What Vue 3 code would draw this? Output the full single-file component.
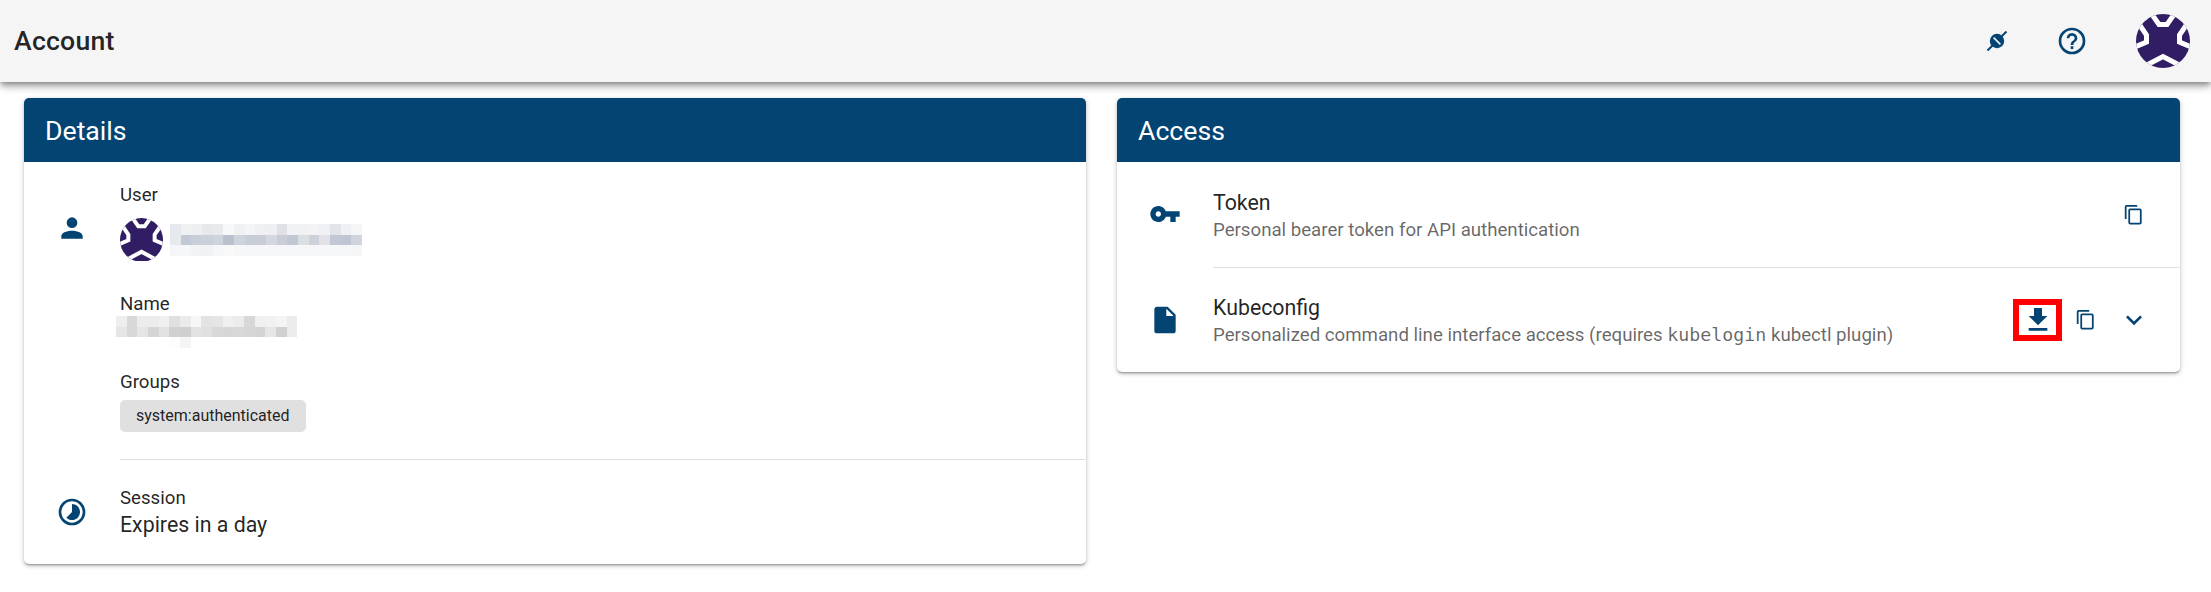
<template>
  <div class="page">
    <header class="app-bar">
      <div class="app-title">Account</div>
      <div class="app-actions">
        <svg class="ic-plug" viewBox="0 0 24 24">
          <path class="plug-tail" d="M2.5 21.5L21.5 2.5" />
          <circle cx="12" cy="12" r="7.2" />
          <path class="plug-gap" d="M8.6 8.6L15.4 15.4" />
        </svg>
        <svg class="ic-help" viewBox="0 0 24 24"><path :d="icons.help" /></svg>
        <div class="avatar avatar-lg">
          <svg viewBox="0 0 54 54">
            <rect width="54" height="54" fill="#311d63" />
            <g fill="none" stroke="#fff" stroke-width="5">
              <polyline v-for="(l, i) in logoLines" :key="i" :points="l" />
            </g>
          </svg>
        </div>
      </div>
    </header>

    <main class="content">
      <section class="card">
        <h2 class="card-title">Details</h2>
        <div class="row row-details">
          <svg class="ic-row ic-account" viewBox="0 0 24 24"><path :d="icons.account" /></svg>
          <div class="details-main">
            <div class="label">User</div>
            <div class="user-line">
              <div class="avatar avatar-sm">
                <svg viewBox="0 0 54 54">
                  <rect width="54" height="54" fill="#311d63" />
                  <g fill="none" stroke="#fff" stroke-width="5">
                    <polyline v-for="(l, i) in logoLines" :key="i" :points="l" />
                  </g>
                </svg>
              </div>
              <div class="mosaic mosaic-user">
                <i v-for="(c, i) in userPixels" :key="i" :style="{ background: '#' + c }"></i>
              </div>
            </div>
            <div class="label label-name">Name</div>
            <div class="mosaic mosaic-name">
              <i v-for="(c, i) in namePixels" :key="i" :style="{ background: '#' + c }"></i>
            </div>
            <div class="label label-groups">Groups</div>
            <span class="chip">system:authenticated</span>
          </div>
        </div>
        <div class="divider divider-inset"></div>
        <div class="row row-session">
          <svg class="ic-row" viewBox="0 0 24 24"><path :d="icons.timelapse" /></svg>
          <div>
            <div class="label">Session</div>
            <div class="value">Expires in a day</div>
          </div>
        </div>
      </section>

      <section class="card card-access">
        <h2 class="card-title">Access</h2>
        <div class="row row-access">
          <svg class="ic-row" viewBox="0 0 24 24"><path :d="icons.key" /></svg>
          <div class="access-text">
            <div class="value">Token</div>
            <div class="sub">Personal bearer token for API authentication</div>
          </div>
          <div class="buttons">
            <span class="btn"><svg class="ic-copy" viewBox="0 0 24 24"><path :d="icons.copy" /></svg></span>
          </div>
        </div>
        <div class="divider divider-inset"></div>
        <div class="row row-access">
          <svg class="ic-row" viewBox="0 0 24 24"><path :d="icons.file" /></svg>
          <div class="access-text">
            <div class="value">Kubeconfig</div>
            <div class="sub">Personalized command line interface access (requires <code>kubelogin</code> kubectl plugin)</div>
          </div>
          <div class="buttons">
            <span class="btn btn-marked"><svg class="ic-big" viewBox="0 0 24 24"><path :d="icons.download" /></svg></span>
            <span class="btn"><svg class="ic-copy" viewBox="0 0 24 24"><path :d="icons.copy" /></svg></span>
            <span class="btn"><svg class="ic-big" viewBox="0 0 24 24"><path :d="icons.chevron" /></svg></span>
          </div>
        </div>
      </section>
    </main>
  </div>
</template>

<script setup>
const icons = {
  help: 'M11,18H13V16H11V18M12,2A10,10 0 0,0 2,12A10,10 0 0,0 12,22A10,10 0 0,0 22,12A10,10 0 0,0 12,2M12,20C7.59,20 4,16.41 4,12C4,7.59 7.59,4 12,4C16.41,4 20,7.59 20,12C20,16.41 16.41,20 12,20M12,6A4,4 0 0,0 8,10H10A2,2 0 0,1 12,8A2,2 0 0,1 14,10C14,12 11,11.75 11,15H13C13,12.75 16,12.5 16,10A4,4 0 0,0 12,6Z',
  account: 'M12,4A4,4 0 0,1 16,8A4,4 0 0,1 12,12A4,4 0 0,1 8,8A4,4 0 0,1 12,4M12,14C16.42,14 20,15.79 20,18V20H4V18C4,15.79 7.58,14 12,14Z',
  timelapse: 'M16.24,7.76C15.07,6.59 13.54,6 12,6V12L7.76,16.24C10.1,18.58 13.9,18.58 16.25,16.24C18.59,13.9 18.59,10.1 16.24,7.76M12,2A10,10 0 0,0 2,12A10,10 0 0,0 12,22A10,10 0 0,0 22,12A10,10 0 0,0 12,2M12,20A8,8 0 0,1 4,12A8,8 0 0,1 12,4A8,8 0 0,1 20,12A8,8 0 0,1 12,20Z',
  key: 'M7 14C5.9 14 5 13.1 5 12S5.9 10 7 10 9 10.9 9 12 8.1 14 7 14M12.6 10C11.8 7.7 9.6 6 7 6C3.7 6 1 8.7 1 12S3.7 18 7 18C9.6 18 11.8 16.3 12.6 14H16V18H20V14H23V10H12.6Z',
  file: 'M13,9V3.5L18.5,9M6,2C4.89,2 4,2.89 4,4V20A2,2 0 0,0 6,22H18A2,2 0 0,0 20,20V8L14,2H6Z',
  copy: 'M19,21H8V7H19M19,5H8A2,2 0 0,0 6,7V21A2,2 0 0,0 8,23H19A2,2 0 0,0 21,21V7A2,2 0 0,0 19,5M16,1H4A2,2 0 0,0 2,3V17H4V3H16V1Z',
  download: 'M5,20H19V18H5M19,9H15V3H9V9H5L12,16L19,9Z',
  chevron: 'M7.41,8.58L12,13.17L16.59,8.58L18,10L12,16L6,10L7.41,8.58Z',
}

const logoLines = [
  '15,-1 23,10.5 31,10.5 39,-1',
  '3,10 10.5,21 10.5,28 -1,33',
  '51,10 43.5,21 43.5,28 55,33',
  '9,52 27,42.5 45,52',
]

// the blurred-out values, row by row
const userPixels = [
  'e5e8ec', 'f0f1f3', 'eeeff2', 'e6e9ec', 'e8eaed', 'f7f8f9', 'f0f1f3', 'f4f5f6', 'eff0f3', 'eeeff2', 'dfe1e6', 'f1f2f3', 'f0f1f3', 'f3f3f5', 'eff0f3', 'e2e4e9', 'eff0f3', 'f4f5f6',
  'e7e9ec', 'c3c9d4', 'c9ced9', 'ccd0da', 'cfd3dc', 'b9c0ce', 'ced3dc', 'c8cdd8', 'c8cdd8', 'd5d7df', 'c8cdd8', 'c1c7d3', 'dbdee3', 'cdd1dc', 'e0e2e7', 'c1c7d4', 'bfc5d1', 'd0d5dd',
  'f5f6f7', 'f6f7f8', 'f2f3f4', 'f1f2f3', 'f6f7f8', 'f9f9fa', 'f6f7f8', 'f6f7f8', 'f6f7f8', 'f6f7f8', 'f6f7f8', 'f6f7f8', 'f6f7f8', 'f6f7f8', 'f6f7f8', 'f6f7f8', 'f6f7f8', 'f5f6f8',
]
const namePixels = [
  'eeeeee', 'd8d8d8', 'ececec', 'ececec', 'f0f0f0', 'e0e0e0', 'ebebeb', 'f7f7f7', 'e3e3e3', 'e5e5e5', 'f0f0f0', 'ececec', 'd8d8d8', 'f0f0f0', 'f1f1f1', 'f4f4f4', 'ebebeb',
  'e5e5e5', 'd8d8d8', 'e5e5e5', 'd5d5d5', 'e2e2e2', 'd0d0d0', 'cfcfcf', 'e3e3e3', 'e0e0e0', 'd8d8d8', 'd6d6d6', 'd8d8d8', 'd6d6d6', 'd4d4d4', 'e6e6e6', 'd0d0d0', 'ebebeb',
  'ffffff', 'ffffff', 'ffffff', 'ffffff', 'ffffff', 'fdfdfd', 'f5f5f5', 'ffffff', 'ffffff', 'ffffff', 'ffffff', 'ffffff', 'ffffff', 'ffffff', 'ffffff', 'ffffff', 'ffffff',
]
</script>

<style scoped>
.page {
  width: 2211px;
  height: 592px;
  overflow: hidden;
  background: #fff;
  font-family: Roboto, 'Liberation Sans', sans-serif;
  color: rgba(0, 0, 0, 0.87);
}

svg {
  display: block;
  flex: none;
  fill: #034473;
}

.app-bar {
  height: 82px;
  background: #f5f5f5;
  display: flex;
  align-items: center;
  justify-content: space-between;
  padding: 0 21px 0 14px;
  box-sizing: border-box;
  box-shadow: 0 3px 5px -1px rgba(0, 0, 0, 0.3), 0 5px 8px 0 rgba(0, 0, 0, 0.2), 0 1px 12px 0 rgba(0, 0, 0, 0.12);
  position: relative;
}

.app-title {
  font-size: 26.67px;
  font-weight: 500;
  letter-spacing: 0.2px;
}

.app-actions {
  display: flex;
  align-items: center;
}

.ic-plug {
  width: 24px;
  height: 24px;
  margin-right: 47px;
}

.plug-tail {
  fill: none;
  stroke: #034473;
  stroke-width: 2;
}

.plug-gap {
  fill: none;
  stroke: #f5f5f5;
  stroke-width: 1.6;
}

.ic-help {
  width: 32px;
  height: 32px;
  margin-right: 48px;
}

.avatar {
  border-radius: 50%;
  overflow: hidden;
  flex: none;
}

.avatar-lg {
  width: 54px;
  height: 54px;
}

.avatar-sm {
  width: 43px;
  height: 44px;
}

.content {
  display: grid;
  grid-template-columns: 1062px 1063px;
  gap: 31px;
  align-items: start;
  padding: 16px 0 0 24px;
}

.card {
  background: #fff;
  border-radius: 5px;
  overflow: hidden;
  box-shadow: 0 2px 2px -1px rgba(0, 0, 0, 0.3), 0 2px 4px 0 rgba(0, 0, 0, 0.16), 0 1px 6px 0 rgba(0, 0, 0, 0.1);
}

.card-title {
  margin: 0;
  height: 64px;
  line-height: 66px;
  padding-left: 21px;
  background: #034473;
  color: #fff;
  font-size: 26.67px;
  font-weight: 400;
}

.row {
  display: flex;
}

.row-details {
  height: 297px;
  padding: 20px 0 0 32px;
  box-sizing: border-box;
}

.ic-row {
  width: 32px;
  height: 32px;
}

.ic-account {
  margin-top: 30px;
}

.details-main {
  margin-left: 32px;
}

.label {
  font-size: 18.67px;
  line-height: 26px;
}

.user-line {
  display: flex;
  align-items: center;
  margin-top: 10px;
  gap: 7px;
}

.mosaic {
  display: grid;
  grid-auto-rows: 10.67px;
}

.mosaic-user {
  grid-template-columns: repeat(18, 10.67px);
}

.mosaic-name {
  grid-template-columns: repeat(17, 10.67px);
  margin: -1px 0 0 -4px;
}

.label-name {
  margin-top: 29px;
}

.label-groups {
  margin-top: 21px;
}

.chip {
  display: inline-block;
  margin-top: 5px;
  height: 32px;
  line-height: 32px;
  padding: 0 16px;
  border-radius: 5px;
  background: #e0e0e0;
  font-size: 16px;
}

.divider {
  height: 1px;
  background: #e0e0e0;
}

.divider-inset {
  margin-left: 96px;
}

.row-session {
  align-items: center;
  gap: 32px;
  height: 104px;
  padding-left: 32px;
  box-sizing: border-box;
}

.value {
  font-size: 21.33px;
  line-height: 28px;
}

.row-access {
  align-items: center;
  height: 104.5px;
  padding: 0 22px 0 32px;
  box-sizing: border-box;
}

.access-text {
  flex: 1;
  margin-left: 32px;
  padding-top: 3px;
}

.sub {
  font-size: 18.67px;
  line-height: 26px;
  color: rgba(0, 0, 0, 0.6);
}

.sub code {
  font-family: 'DejaVu Sans Mono', 'Liberation Mono', monospace;
  font-size: 18.3px;
}

.buttons {
  display: flex;
}

.btn {
  width: 48px;
  height: 48px;
  display: flex;
  align-items: center;
  justify-content: center;
}

.btn-marked {
  position: relative;
}

.btn-marked::after {
  content: '';
  position: absolute;
  left: -1px;
  top: 3px;
  width: 49px;
  height: 42px;
  border: 6px solid #f00;
  box-sizing: border-box;
}

.ic-copy {
  width: 21.33px;
  height: 21.33px;
}

.ic-big {
  width: 32px;
  height: 32px;
}
</style>
